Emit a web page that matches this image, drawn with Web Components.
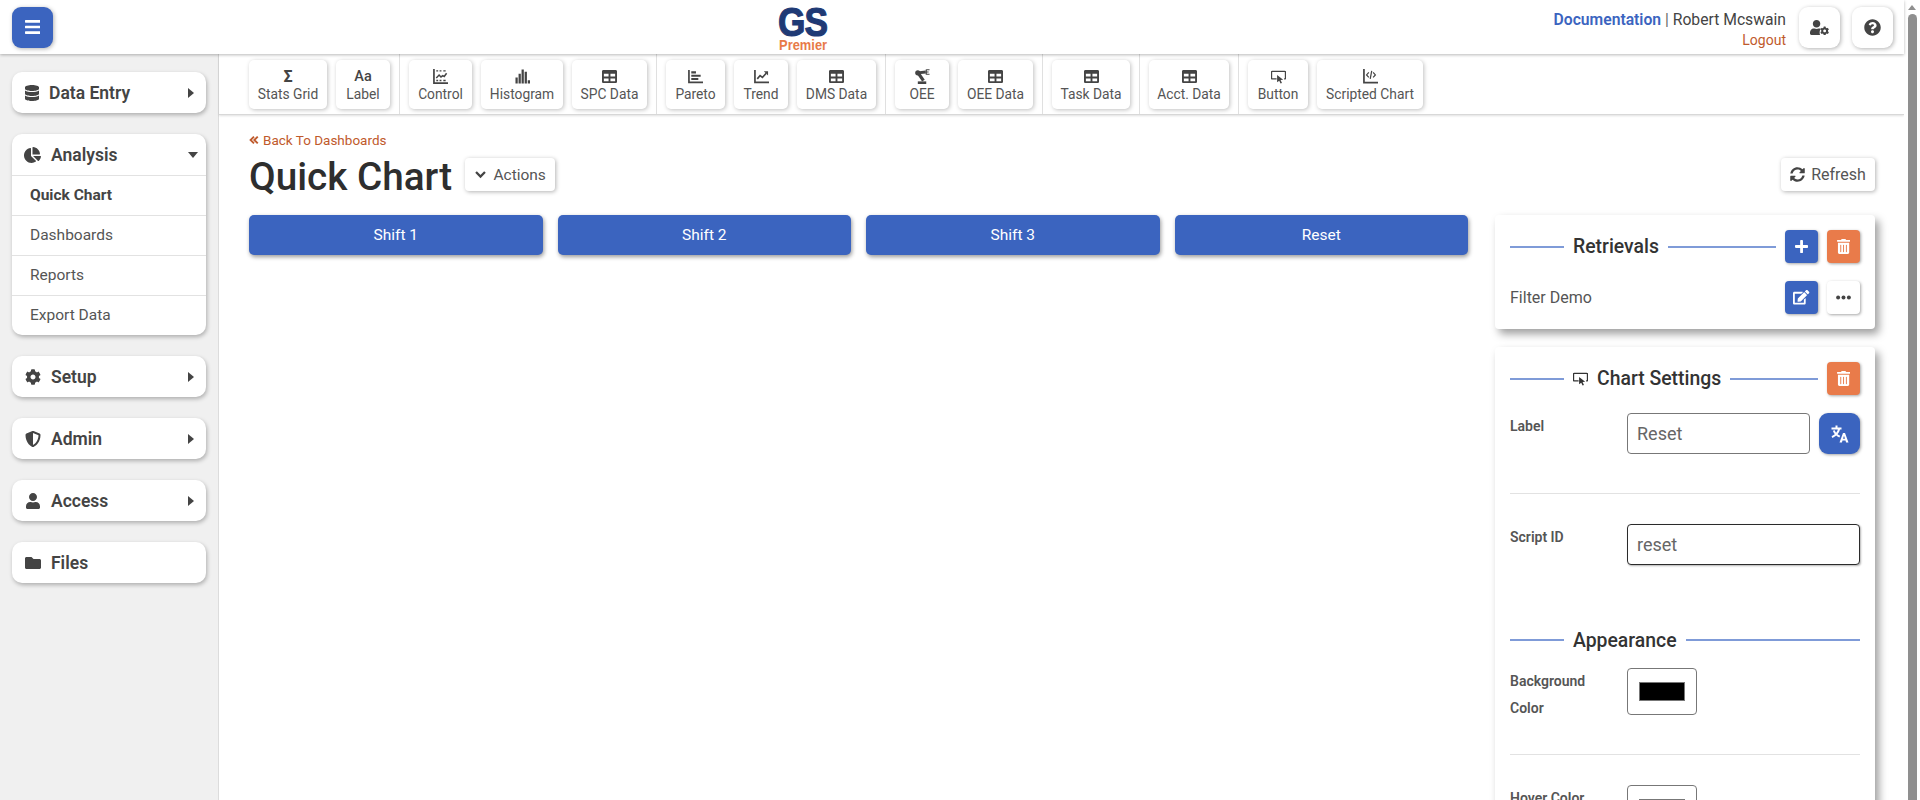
<!DOCTYPE html>
<html lang="en">
<head>
<meta charset="utf-8">
<title>Quick Chart</title>
<style>
    html, body { margin: 0; height: 800px; overflow: hidden; background: #fff; }
    body { font-family: Roboto, "Liberation Sans", sans-serif; color: #444; }
</style>
</head>
<body>
<gs-app>
    <gs-header slot="header"></gs-header>
    <gs-sidebar slot="sidebar">
        <side-card icon="database" arrow="right" narrow>Data Entry</side-card>
        <side-card icon="chartPie" arrow="down" open>Analysis
            <side-link slot="links" active>Quick Chart</side-link>
            <side-link slot="links">Dashboards</side-link>
            <side-link slot="links">Reports</side-link>
            <side-link slot="links">Export Data</side-link>
        </side-card>
        <side-card icon="cog" arrow="right">Setup</side-card>
        <side-card icon="shield" arrow="right">Admin</side-card>
        <side-card icon="user" arrow="right">Access</side-card>
        <side-card icon="folder">Files</side-card>
    </gs-sidebar>
    <tool-bar slot="toolbar">
        <tool-group>
            <tool-button w="78"><span slot="icon" style="font-size:16px;font-weight:700;color:#444;line-height:15px">Σ</span>Stats Grid</tool-button>
            <tool-button w="54"><span slot="icon" style="font-size:14.5px;font-weight:500;color:#444;line-height:15px">Aa</span>Label</tool-button>
        </tool-group>
        <tool-group>
            <tool-button w="63"><gs-icon slot="icon" name="control" size="15"></gs-icon>Control</tool-button>
            <tool-button w="82"><gs-icon slot="icon" name="histogram" size="15"></gs-icon>Histogram</tool-button>
            <tool-button w="75"><gs-icon slot="icon" name="table" size="15"></gs-icon>SPC Data</tool-button>
        </tool-group>
        <tool-group>
            <tool-button w="59"><gs-icon slot="icon" name="pareto" size="15"></gs-icon>Pareto</tool-button>
            <tool-button w="54"><gs-icon slot="icon" name="trend" size="15"></gs-icon>Trend</tool-button>
            <tool-button w="79"><gs-icon slot="icon" name="table" size="15"></gs-icon>DMS Data</tool-button>
        </tool-group>
        <tool-group>
            <tool-button w="54"><gs-icon slot="icon" name="robot" size="15"></gs-icon>OEE</tool-button>
            <tool-button w="75"><gs-icon slot="icon" name="table" size="15"></gs-icon>OEE Data</tool-button>
        </tool-group>
        <tool-group>
            <tool-button w="78"><gs-icon slot="icon" name="table" size="15"></gs-icon>Task Data</tool-button>
        </tool-group>
        <tool-group>
            <tool-button w="80"><gs-icon slot="icon" name="table" size="15"></gs-icon>Acct. Data</tool-button>
        </tool-group>
        <tool-group last>
            <tool-button w="60"><gs-icon slot="icon" name="button" size="15"></gs-icon>Button</tool-button>
            <tool-button w="106"><gs-icon slot="icon" name="scripted" size="15"></gs-icon>Scripted Chart</tool-button>
        </tool-group>
    </tool-bar>
    <page-heading slot="heading"></page-heading>
    <chart-buttons slot="chart">
        <chart-button>Shift 1</chart-button>
        <chart-button>Shift 2</chart-button>
        <chart-button>Shift 3</chart-button>
        <chart-button>Reset</chart-button>
    </chart-buttons>
    <settings-column slot="panels">
        <side-panel>
            <panel-title>Retrievals
                <icon-btn slot="actions" kind="blue" icon="plus"></icon-btn>
                <icon-btn slot="actions" kind="orange" icon="trash"></icon-btn>
            </panel-title>
            <retrieval-row>Filter Demo
                <icon-btn slot="actions" kind="blue" icon="edit"></icon-btn>
                <icon-btn slot="actions" kind="white" icon="dots"></icon-btn>
            </retrieval-row>
        </side-panel>
        <side-panel>
            <panel-title><gs-icon slot="before" name="button" size="15" color="#333"></gs-icon>Chart Settings
                <icon-btn slot="actions" kind="orange" icon="trash"></icon-btn>
            </panel-title>
            <form-row divider label="Label">
                <text-box style="width:183px">Reset</text-box>
                <icon-btn kind="blue" icon="language" big></icon-btn>
            </form-row>
            <form-row label="Script ID" style="padding-bottom:58px">
                <text-box focused style="width:233px">reset</text-box>
            </form-row>
            <panel-title tight>Appearance</panel-title>
            <form-row divider label="Background Color" style="padding-bottom:32px"><color-box></color-box></form-row>
            <form-row label="Hover Color"><color-box></color-box></form-row>
        </side-panel>
    </settings-column>
</gs-app>

<script>
const COG = 'M487.4 315.7l-42.6-24.6c4.3-23.2 4.3-47 0-70.2l42.6-24.6c4.9-2.8 7.1-8.6 5.5-14-11.1-35.6-30-67.8-54.7-94.6-3.8-4.1-10-5.1-14.8-2.3L380.8 110c-17.9-15.4-38.5-27.3-60.8-35.1V25.8c0-5.6-3.9-10.5-9.4-11.7-36.7-8.2-74.3-7.8-109.2 0-5.5 1.2-9.4 6.1-9.4 11.7V75c-22.2 7.9-42.8 19.8-60.8 35.1L88.7 85.5c-4.9-2.8-11-1.9-14.8 2.3-24.7 26.7-43.6 58.9-54.7 94.6-1.7 5.4.6 11.2 5.5 14L67.3 221c-4.3 23.2-4.3 47 0 70.2l-42.6 24.6c-4.9 2.8-7.1 8.6-5.5 14 11.1 35.6 30 67.8 54.7 94.6 3.8 4.1 10 5.1 14.8 2.3l42.6-24.6c17.9 15.4 38.5 27.3 60.8 35.1v49.2c0 5.6 3.9 10.5 9.4 11.7 36.7 8.2 74.3 7.8 109.2 0 5.5-1.2 9.4-6.1 9.4-11.7v-49.2c22.2-7.9 42.8-19.8 60.8-35.1l42.6 24.6c4.9 2.8 11 1.9 14.8-2.3 24.7-26.7 43.6-58.9 54.7-94.6 1.5-5.5-.7-11.3-5.6-14.1zM256 336c-44.1 0-80-35.9-80-80s35.9-80 80-80 80 35.9 80 80-35.9 80-80 80z';

const ICONS = {
    bars: ['0 0 448 512', '<path d="M16 132h416c8.837 0 16-7.163 16-16V76c0-8.837-7.163-16-16-16H16C7.163 60 0 67.163 0 76v40c0 8.837 7.163 16 16 16zm0 160h416c8.837 0 16-7.163 16-16v-40c0-8.837-7.163-16-16-16H16c-8.837 0-16 7.163-16 16v40c0 8.837 7.163 16 16 16zm0 160h416c8.837 0 16-7.163 16-16v-40c0-8.837-7.163-16-16-16H16c-8.837 0-16 7.163-16 16v40c0 8.837 7.163 16 16 16z"/>'],
    database: ['0 0 448 512', '<path d="M448 73.143v45.714C448 159.143 347.667 192 224 192S0 159.143 0 118.857V73.143C0 32.857 100.333 0 224 0s224 32.857 224 73.143zM448 176v102.857C448 319.143 347.667 352 224 352S0 319.143 0 278.857V176c48.125 33.143 136.208 48.572 224 48.572S399.874 209.143 448 176zm0 160v102.857C448 479.143 347.667 512 224 512S0 479.143 0 438.857V336c48.125 33.143 136.208 48.572 224 48.572S399.874 369.143 448 336z"/>'],
    chartPie: ['0 0 544 512', '<path d="M527.79 288H290.5l158.03 158.03c6.04 6.04 15.98 6.53 22.19.68 38.7-36.46 65.32-85.61 73.13-140.86 1.34-9.46-6.51-17.85-16.06-17.85zm-15.83-64.8C503.72 103.74 408.26 8.28 288.8.04 279.68-.59 272 7.1 272 16.24V240h223.77c9.14 0 16.82-7.68 16.19-16.8zM224 288V50.71c0-9.55-8.39-17.4-17.84-16.06C86.99 51.49-4.1 155.6.14 280.37 4.5 408.51 114.83 513.59 243.03 511.98c50.4-.63 96.97-16.87 135.26-44.03 7.9-5.6 8.42-17.23 1.57-24.08L224 288z"/>'],
    cog: ['0 0 512 512', `<path d="${COG}"/>`],
    shield: ['0 0 512 512', '<path d="M466.5 83.7l-192-80a48.15 48.15 0 0 0-36.9 0l-192 80C27.7 91.1 16 108.6 16 128c0 198.5 114.5 335.7 221.5 380.3 11.8 4.9 25.1 4.9 36.9 0C360.1 472.6 496 349.3 496 128c0-19.4-11.7-36.9-29.5-44.3zM256.1 446.3l-.1-381 175.9 73.3c-3.3 151.4-82.1 261.1-175.8 307.7z"/>'],
    user: ['0 0 448 512', '<path d="M224 256c70.7 0 128-57.3 128-128S294.7 0 224 0 96 57.3 96 128s57.3 128 128 128zm89.6 32h-16.7c-22.2 10.2-46.9 16-72.9 16s-50.6-5.8-72.9-16h-16.7C60.2 288 0 348.2 0 422.4V464c0 26.5 21.5 48 48 48h352c26.5 0 48-21.5 48-48v-41.6c0-74.2-60.2-134.4-134.4-134.4z"/>'],
    folder: ['0 0 512 512', '<path d="M464 128H272l-64-64H48C21.49 64 0 85.49 0 112v288c0 26.51 21.49 48 48 48h416c26.51 0 48-21.49 48-48V176c0-26.51-21.49-48-48-48z"/>'],
    question: ['0 0 512 512', '<path d="M504 256c0 136.997-111.043 248-248 248S8 392.997 8 256C8 119.083 119.043 8 256 8s248 111.083 248 248zM262.655 90c-54.497 0-89.255 22.957-116.549 63.758-3.536 5.286-2.353 12.415 2.715 16.258l34.699 26.31c5.205 3.947 12.621 3.008 16.665-2.122 17.864-22.658 30.113-35.797 57.303-35.797 20.429 0 45.698 13.148 45.698 32.958 0 14.976-12.363 22.667-32.534 33.976C247.128 238.528 216 254.941 216 296v4c0 6.627 5.373 12 12 12h56c6.627 0 12-5.373 12-12v-1.333c0-28.462 83.186-29.647 83.186-106.667 0-58.002-60.165-102-116.531-102zM256 338c-25.365 0-46 20.635-46 46 0 25.364 20.635 46 46 46s46-20.636 46-46c0-25.365-20.635-46-46-46z"/>'],
    userCog: ['0 0 640 512', `<path d="M224 256c70.7 0 128-57.3 128-128S294.7 0 224 0 96 57.3 96 128s57.3 128 128 128zM330 464V400c0-40 14-72 40-104-10-5-22-8-36-8h-37c-22 10-47 16-73 16s-51-6-73-16h-37C60 288 0 348 0 422v42c0 26 21 48 48 48h298c-10-14-16-30-16-48z"/><g transform="translate(500 372) scale(.6)"><path transform="translate(-256 -256)" d="${COG}"/></g>`],
    plus: ['0 0 448 512', '<path d="M416 208H272V64c0-17.67-14.33-32-32-32h-32c-17.67 0-32 14.33-32 32v144H32c-17.67 0-32 14.33-32 32v32c0 17.67 14.33 32 32 32h144v144c0 17.67 14.33 32 32 32h32c17.67 0 32-14.33 32-32V304h144c17.67 0 32-14.33 32-32v-32c0-17.67-14.33-32-32-32z"/>'],
    trash: ['0 0 448 512', '<path d="M32 464a48 48 0 0 0 48 48h288a48 48 0 0 0 48-48V128H32zm272-256a16 16 0 0 1 32 0v224a16 16 0 0 1-32 0zm-96 0a16 16 0 0 1 32 0v224a16 16 0 0 1-32 0zm-96 0a16 16 0 0 1 32 0v224a16 16 0 0 1-32 0zM432 32H312l-9.4-18.7A24 24 0 0 0 281.1 0H166.8a23.72 23.72 0 0 0-21.4 13.3L136 32H16A16 16 0 0 0 0 48v32a16 16 0 0 0 16 16h416a16 16 0 0 0 16-16V48a16 16 0 0 0-16-16z"/>'],
    edit: ['0 0 576 512', '<path d="M402.6 83.2l90.2 90.2c3.8 3.8 3.8 10 0 13.8L274.4 405.6l-92.8 10.3c-12.4 1.4-22.9-9.1-21.5-21.5l10.3-92.8L388.8 83.2c3.8-3.8 10-3.8 13.8 0zm162-22.9l-48.8-48.8c-15.2-15.2-39.9-15.2-55.2 0l-35.4 35.4c-3.8 3.8-3.8 10 0 13.8l90.2 90.2c3.8 3.8 10 3.8 13.8 0l35.4-35.4c15.2-15.3 15.2-40 0-55.2zM384 346.2V448H64V128h229.8c3.2 0 6.2-1.3 8.5-3.5l40-40c7.6-7.6 2.2-20.5-8.5-20.5H48C21.5 64 0 85.5 0 112v352c0 26.5 21.5 48 48 48h352c26.5 0 48-21.5 48-48V306.2c0-10.7-12.9-16-20.5-8.5l-40 40c-2.2 2.3-3.5 5.3-3.5 8.5z"/>'],
    dots: ['0 0 512 512', '<circle cx="72" cy="256" r="68"/><circle cx="256" cy="256" r="68"/><circle cx="440" cy="256" r="68"/>'],
    sync: ['0 0 512 512', '<path d="M370.72 133.28C339.458 104.008 298.888 87.962 255.848 88c-77.458.068-144.328 53.178-162.791 126.85-1.344 5.363-6.122 9.15-11.651 9.15H24.103c-7.498 0-13.194-6.807-11.807-14.176C33.933 94.924 134.813 8 256 8c66.448 0 126.791 26.136 171.315 68.685L463.03 40.97C478.149 25.851 504 36.559 504 57.941V192c0 13.255-10.745 24-24 24H345.941c-21.382 0-32.09-25.851-16.971-40.971l41.75-41.749zM32 296h134.059c21.382 0 32.09 25.851 16.971 40.971l-41.75 41.75c31.262 29.273 71.835 45.319 114.876 45.28 77.418-.07 144.315-53.144 162.787-126.849 1.344-5.363 6.122-9.15 11.651-9.15h57.304c7.498 0 13.194 6.807 11.807 14.176C478.067 417.076 377.187 504 256 504c-66.448 0-126.791-26.136-171.315-68.685L48.97 471.03C33.851 486.149 8 475.441 8 454.059V320c0-13.255 10.745-24 24-24z"/>'],
    table: ['0 0 512 512', '<path d="M464 32H48C21.49 32 0 53.49 0 80v352c0 26.51 21.49 48 48 48h416c26.51 0 48-21.49 48-48V80c0-26.51-21.49-48-48-48zM224 416H64v-96h160v96zm0-160H64v-96h160v96zm224 160H288v-96h160v96zm0-160H288v-96h160v96z"/>'],
    chevron: ['0 0 16 16', '<path d="M2.5 5 8 10.500 13.500 5" fill="none" stroke="currentColor" stroke-width="2.800"/>'],
    angles: ['0 0 16 16', '<path d="M8 2.500 2.500 8 8 13.500M14 2.500 8.500 8l5.500 5.500" fill="none" stroke="currentColor" stroke-width="3"/>'],
    control: ['0 0 16 16', '<path d="M1 0v15h15" fill="none" stroke="currentColor" stroke-width="1.800"/><path d="M3.500 2h2M7 2h2M11 2h2.500M3.500 12.200h2M7 12.200h2M11 12.200h2.500" stroke="currentColor" stroke-width="1.500"/><path d="m3.500 9.500 3-3 2 2 2-1.500 1.500 1 2.500-3.500" fill="none" stroke="currentColor" stroke-width="1.600"/>'],
    histogram: ['0 0 16 16', '<path d="M.5 9h2.400v6.500H.5zM3.800 5h2.400v10.500H3.800zM7 .5h2.400v15H7zM10.300 3h2.400v12.500h-2.400zM13.600 12h2.400v3.500h-2.400z"/>'],
    pareto: ['0 0 16 16', '<path d="M1 1v13.200h15" fill="none" stroke="currentColor" stroke-width="1.800"/><path d="M3.500 2.500h5v2.200h-5zM3.500 6h10v2.200h-10zM3.500 9.500h7.500v2.200h-7.500z"/>'],
    trend: ['0 0 16 16', '<path d="M1 1v13.200h15" fill="none" stroke="currentColor" stroke-width="1.800"/><path d="m3.500 10.500 3-3.500 2.500 2 4-4.500" fill="none" stroke="currentColor" stroke-width="1.800"/><path d="M10.500 2.500H15V7z"/>'],
    robot: ['0 0 16 16', '<path d="M3 13.200h9v2.800H3z"/><path d="M3.500 4.500 9 12.500" fill="none" stroke="currentColor" stroke-width="3.400"/><path d="M3 4.200 11.500 3.200" fill="none" stroke="currentColor" stroke-width="3"/><circle cx="3" cy="4" r="2.800"/><path d="M12 .8h3.500M12 3.200h2.500M12 5.600h3.500M12 .5v5.500" fill="none" stroke="currentColor" stroke-width="1.200"/>'],
    button: ['0 0 16 16', '<path d="M6 10.500H1.500a1 1 0 0 1-1-1v-6a1 1 0 0 1 1-1h13a1 1 0 0 1 1 1v6a1 1 0 0 1-1 1h-.500" fill="none" stroke="currentColor" stroke-width="1.500"/><path d="M6.500 6.500 13 11.500l-2.800.3 1.500 3-1.500.7-1.400-3-2.300 1.700z"/>'],
    scripted: ['0 0 16 16', '<path d="M1 0v14.500h15" fill="none" stroke="currentColor" stroke-width="1.800"/><path d="M6.200 3.500 3.800 6.300 6.200 9M10.800 3.500l2.400 2.800L10.800 9M9.300 2 7.700 10.500" fill="none" stroke="currentColor" stroke-width="1.300"/>'],
    language: ['0 0 18 18', '<path d="M.5 3.500h10M5.500.5v3M8.300 3.500C7.300 7.500 4.500 10.500 1 12.200M2.800 5.500c1 3 3.500 5 6 6.200" fill="none" stroke="currentColor" stroke-width="2"/><path d="m8.500 17.500 3.500-9.500h2l3.500 9.500h-2.400l-.6-2h-3l-.6 2zm3.500-3.700h2L13 10.800z"/>']
};

/* base class: every element gets its open shadow root from a static markup getter */
class ShadowElement extends HTMLElement {
    constructor() {
        super();
        this.attachShadow({ mode: 'open' });
    }

    static get styles() { return ':host { display: block; }'; }

    get markup() { return '<slot></slot>'; }

    connectedCallback() {
        this.shadowRoot.innerHTML = `<style>${this.constructor.styles}</style>${this.markup}`;
    }
}

class GsIcon extends ShadowElement {
    static get styles() {
        return `
            :host { display: inline-flex; align-items: center; justify-content: center; line-height: 0; }
            svg { display: block; fill: currentColor; }
        `;
    }

    get markup() {
        const [box, body] = ICONS[this.getAttribute('name')];
        const size = this.getAttribute('size') || 16;
        if (this.hasAttribute('color')) this.style.color = this.getAttribute('color');
        return `<svg viewBox="${box}" height="${size}" aria-hidden="true">${body}</svg>`;
    }
}

class GsApp extends ShadowElement {
    static get styles() {
        return `
            :host { display: flex; width: 1920px; height: 800px; overflow: hidden; }
            .page { flex: 0 0 1904px; display: flex; flex-direction: column; height: 800px; }
            .below { flex: 1; display: flex; min-height: 0; }
            .main { flex: 1; display: flex; flex-direction: column; min-width: 0; }
            .work { flex: 1; display: flex; gap: 27px; padding: 0 29px 0 30px; min-height: 0; }
            .chart { flex: 0 0 1219px; }
            .panels { flex: 0 0 380px; }
        `;
    }

    get markup() {
        return `
            <div class="page">
                <slot name="header"></slot>
                <div class="below">
                    <slot name="sidebar"></slot>
                    <div class="main">
                        <slot name="toolbar"></slot>
                        <slot name="heading"></slot>
                        <div class="work">
                            <div class="chart"><slot name="chart"></slot></div>
                            <div class="panels"><slot name="panels"></slot></div>
                        </div>
                    </div>
                </div>
            </div>
            <page-scrollbar></page-scrollbar>
        `;
    }
}

class PageScrollbar extends ShadowElement {
    static get styles() {
        return `
            :host { display: block; flex: 0 0 16px; height: 800px; background: #fff; }
            .up { width: 0; height: 0; margin: 5px auto 4px; border: 4px solid transparent; border-top: 0; border-bottom: 5px solid #8f8f8f; }
            .thumb { width: 9px; height: 790px; margin-left: 4px; background: #8f8f8f; border-radius: 5px 5px 0 0; }
        `;
    }

    get markup() { return '<div class="up"></div><div class="thumb"></div>'; }
}

class GsHeader extends ShadowElement {
    static get styles() {
        return `
            :host {
                display: flex; align-items: center; height: 54px; box-sizing: border-box; flex: none;
                padding: 0 11px 0 12px; background: #fff; position: relative; z-index: 2;
                box-shadow: 0 1px 3px rgba(0,0,0,.28);
            }
            .menu, .round {
                width: 41px; height: 41px; border-radius: 9px; display: flex; align-items: center; justify-content: center;
                box-shadow: 1px 1px 4px rgba(0,0,0,.3);
            }
            .menu { background: #3b64bf; color: #fff; }
            .round { background: #fff; color: #444; margin-left: 12px; }
            .logo { margin-left: 725px; width: 50px; display: flex; flex-direction: column; align-items: center; font-family: "Liberation Sans", sans-serif; font-weight: 700; }
            .gs { color: #1f3a75; font-size: 41px; line-height: 33px; height: 33px; margin-top: 3px; letter-spacing: -1px; transform: scaleX(.86); -webkit-text-stroke: 1.2px #1f3a75; }
            .premier { color: #e87a48; font-size: 14px; line-height: 13px; transform: scaleX(.92); white-space: nowrap; }
            .user { margin-left: auto; margin-right: 1px; padding-top: 6px; text-align: right; font-size: 15.700px; line-height: 21px; color: #444; }
            .doc { color: #3b64bf; font-weight: 600; }
            .bar { color: #666; }
            .logout { color: #bf5a2c; font-size: 14px; }
        `;
    }

    get markup() {
        return `
            <div class="menu"><gs-icon name="bars" size="18"></gs-icon></div>
            <div class="logo"><div class="gs">GS</div><div class="premier">Premier</div></div>
            <div class="user">
                <div><span class="doc">Documentation</span> <span class="bar">|</span> Robert Mcswain</div>
                <div class="logout">Logout</div>
            </div>
            <div class="round"><gs-icon name="userCog" size="15"></gs-icon></div>
            <div class="round"><gs-icon name="question" size="17"></gs-icon></div>
        `;
    }
}

class GsSidebar extends ShadowElement {
    static get styles() {
        return `
            :host {
                display: flex; flex-direction: column; gap: 21px; flex: 0 0 219px; box-sizing: border-box;
                padding: 18px 12px; background: #f0f0f0; border-right: 1px solid #dcdcdc;
            }
        `;
    }
}

class SideCard extends ShadowElement {
    static get styles() {
        return `
            :host {
                display: block; width: 194px; background: #fff; border-radius: 10px; overflow: hidden;
                box-shadow: 1px 2px 4px rgba(0,0,0,.28); color: #444;
            }
            .head { display: flex; align-items: center; height: 41px; padding: 0 12px; font-size: 17.500px; font-weight: 600; box-sizing: border-box; }
            .ico { width: 17px; display: flex; justify-content: center; margin-right: 10px; flex: none; }
            :host([narrow]) .ico { width: 15px; }
            .arrow { margin-left: auto; width: 0; height: 0; border-style: solid; }
            .right { border-width: 5px 0 5px 6px; border-color: transparent transparent transparent #444; }
            .down { margin-right: -4px; border-width: 6px 5px 0 5px; border-color: #444 transparent transparent transparent; }
            ::slotted(side-link) { border-top: 1px solid #e2e2e2; }
        `;
    }

    get markup() {
        const arrow = this.getAttribute('arrow');
        return `
            <div class="head">
                <span class="ico"><gs-icon name="${this.getAttribute('icon')}" size="16"></gs-icon></span>
                <slot></slot>
                ${arrow ? `<span class="arrow ${arrow}"></span>` : ''}
            </div>
            <slot name="links"></slot>
        `;
    }
}

class SideLink extends ShadowElement {
    static get styles() {
        return `
            :host { display: flex; align-items: center; height: 40px; box-sizing: border-box; padding: 0 0 2px 18px; font-size: 15.500px; color: #555; }
            :host([active]) { font-weight: 700; color: #444; }
        `;
    }
}

class ToolBar extends ShadowElement {
    static get styles() {
        return `
            :host {
                display: flex; flex: none; height: 61px; box-sizing: border-box; padding-left: 30px; background: #fff;
                border-bottom: 1px solid #d8d8d8; box-shadow: 0 1px 2px rgba(0,0,0,.12);
            }
        `;
    }
}

class ToolGroup extends ShadowElement {
    static get styles() {
        return `
            :host { display: flex; gap: 9px; padding: 6px 9px 0 0; margin-right: 9px; border-right: 1px solid #e0e0e0; }
            :host([last]) { border-right: 0; }
        `;
    }
}

class ToolButton extends ShadowElement {
    static get styles() {
        return `
            :host {
                display: flex; flex-direction: column; align-items: center; height: 49px; box-sizing: border-box; padding-top: 9px;
                background: #fff; border-radius: 5px; box-shadow: 1px 1px 4px rgba(0,0,0,.25); color: #555; font-size: 13.800px;
            }
            .icon { height: 15px; display: flex; align-items: center; color: #444; margin-bottom: 2px; }
            .text { line-height: 16px; white-space: nowrap; }
        `;
    }

    get markup() {
        this.style.width = `${this.getAttribute('w')}px`;
        return '<div class="icon"><slot name="icon"></slot></div><div class="text"><slot></slot></div>';
    }
}

class PageHeading extends ShadowElement {
    static get styles() {
        return `
            :host { display: block; flex: none; height: 100px; box-sizing: border-box; padding: 16px 29px 0 30px; }
            .back { display: flex; align-items: center; gap: 4px; height: 17px; font-size: 13.500px; color: #bf5a2c; }
            .row { display: flex; align-items: center; height: 33px; margin-top: 10px; }
            h1 { margin: 0 12px 0 0; padding-top: 2px; height: 33px; box-sizing: border-box; font-size: 38.700px; font-weight: 500; line-height: 33px; color: #2e2e2e; white-space: nowrap; }
            .btn {
                display: flex; align-items: center; justify-content: center; gap: 6px; height: 33px; box-sizing: border-box; background: #fff;
                border-radius: 4px; box-shadow: 1px 1px 4px rgba(0,0,0,.3); font-size: 15.500px; color: #555;
            }
            .actions { width: 90px; margin-left: 1px; }
            .refresh { width: 94px; margin-left: auto; font-size: 16px; }
        `;
    }

    get markup() {
        return `
            <div class="back"><gs-icon name="angles" size="10"></gs-icon>Back To Dashboards</div>
            <div class="row">
                <h1>Quick Chart</h1>
                <div class="btn actions"><gs-icon name="chevron" size="13" color="#444"></gs-icon>Actions</div>
                <div class="btn refresh"><gs-icon name="sync" size="15" color="#444"></gs-icon>Refresh</div>
            </div>
        `;
    }
}

class ChartButtons extends ShadowElement {
    static get styles() {
        return ':host { display: grid; grid-template-columns: repeat(4, 1fr); column-gap: 15px; }';
    }
}

class ChartButton extends ShadowElement {
    static get styles() {
        return `
            :host {
                display: flex; align-items: center; justify-content: center; height: 40px; background: #3b64bf; color: #fff;
                border-radius: 5px; font-size: 15.500px; box-shadow: 1px 2px 4px rgba(0,0,0,.4);
            }
        `;
    }
}

class SettingsColumn extends ShadowElement {
    static get styles() {
        return ':host { display: flex; flex-direction: column; gap: 18px; }';
    }
}

class SidePanel extends ShadowElement {
    static get styles() {
        return `
            :host {
                display: block; padding: 15px; background: #fff; border-radius: 4px;
                box-shadow: 4px 5px 9px rgba(0,0,0,.38);
            }
        `;
    }
}

class PanelTitle extends ShadowElement {
    static get styles() {
        return `
            :host { display: flex; align-items: center; height: 33px; font-size: 19.400px; font-weight: 500; color: #333; white-space: nowrap; }
            :host([tight]) { height: 34px; margin-bottom: 11px; }
            .line { height: 2px; background: #7f9bd8; }
            .short { flex: 0 0 54px; }
            .long { flex: 1; }
            .text { display: flex; align-items: center; gap: 9px; margin: 0 9px; }
            .actions { display: flex; gap: 9px; margin-left: 9px; }
        `;
    }

    get markup() {
        const hasActions = this.querySelector('[slot=actions]');
        return `
            <span class="line short"></span>
            <span class="text"><slot name="before"></slot><slot></slot></span>
            <span class="line long"></span>
            ${hasActions ? '<span class="actions"><slot name="actions"></slot></span>' : ''}
        `;
    }
}

class RetrievalRow extends ShadowElement {
    static get styles() {
        return `
            :host { display: flex; align-items: center; height: 33px; margin-top: 18px; font-size: 16px; color: #555; }
            .actions { display: flex; gap: 9px; margin-left: auto; }
        `;
    }

    get markup() {
        return '<slot></slot><span class="actions"><slot name="actions"></slot></span>';
    }
}

class IconBtn extends ShadowElement {
    static get styles() {
        return `
            :host {
                display: flex; align-items: center; justify-content: center; width: 33px; height: 33px; flex: none;
                border-radius: 4px; box-shadow: 1px 1px 3px rgba(0,0,0,.35);
            }
            :host([kind=blue]) { background: #3b64bf; color: #fff; }
            :host([kind=orange]) { background: #e97b4a; color: #fff; }
            :host([kind=white]) { background: #fff; color: #444; }
            :host([big]) { width: 41px; height: 41px; border-radius: 9px; margin-left: 9px; }
        `;
    }

    get markup() {
        const sizes = { plus: 15, trash: 15, edit: 14.5, dots: 15, language: 18 };
        const name = this.getAttribute('icon');
        return `<gs-icon name="${name}" size="${sizes[name]}"></gs-icon>`;
    }
}

class FormRow extends ShadowElement {
    static get styles() {
        return `
            :host { display: grid; grid-template-columns: 117px 1fr; padding-top: 18px; }
            :host([divider]) { padding-bottom: 39px; border-bottom: 1px solid #e2e2e2; margin-bottom: 30px; }
            .label { font-size: 14px; font-weight: 600; line-height: 27px; color: #555; padding-right: 30px; }
            .field { display: flex; align-items: flex-start; }
        `;
    }

    get markup() {
        return `<div class="label">${this.getAttribute('label')}</div><div class="field"><slot></slot></div>`;
    }

    connectedCallback() {
        super.connectedCallback();
        // only the row straight after the chart settings title keeps the 18px above it
        const prev = this.previousElementSibling;
        if (prev && (prev.tagName !== 'PANEL-TITLE' || prev.hasAttribute('tight'))) this.style.paddingTop = '0';
    }
}

class TextBox extends ShadowElement {
    static get styles() {
        return `
            :host {
                display: flex; align-items: center; height: 41px; box-sizing: border-box; padding-left: 9px; background: #fff;
                border: 1px solid #777; border-radius: 4px; font-size: 18px; color: #666;
            }
            :host([focused]) { border-color: #2b2b2b; box-shadow: 1px 1px 2px rgba(0,0,0,.3); }
        `;
    }
}

class ColorBox extends ShadowElement {
    static get styles() {
        return `
            :host {
                display: flex; align-items: center; justify-content: center; width: 70px; height: 47px; box-sizing: border-box;
                background: #fff; border: 1px solid #777; border-radius: 4px;
            }
            .swatch { width: 46px; height: 19px; box-sizing: border-box; background: #000; border: 1px solid #777; }
        `;
    }

    get markup() { return '<div class="swatch"></div>'; }
}

customElements.define('gs-icon', GsIcon);
customElements.define('gs-app', GsApp);
customElements.define('page-scrollbar', PageScrollbar);
customElements.define('gs-header', GsHeader);
customElements.define('gs-sidebar', GsSidebar);
customElements.define('side-card', SideCard);
customElements.define('side-link', SideLink);
customElements.define('tool-bar', ToolBar);
customElements.define('tool-group', ToolGroup);
customElements.define('tool-button', ToolButton);
customElements.define('page-heading', PageHeading);
customElements.define('chart-buttons', ChartButtons);
customElements.define('chart-button', ChartButton);
customElements.define('settings-column', SettingsColumn);
customElements.define('side-panel', SidePanel);
customElements.define('panel-title', PanelTitle);
customElements.define('retrieval-row', RetrievalRow);
customElements.define('icon-btn', IconBtn);
customElements.define('form-row', FormRow);
customElements.define('text-box', TextBox);
customElements.define('color-box', ColorBox);
</script>
</body>
</html>
